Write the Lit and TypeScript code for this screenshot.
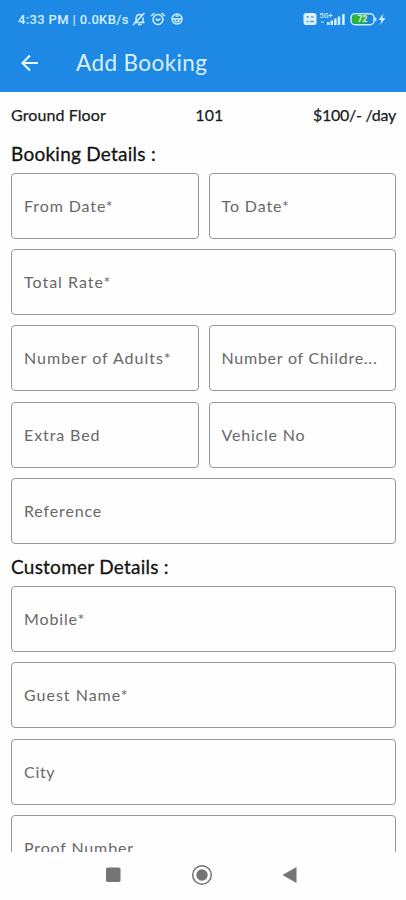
import { LitElement, html, css } from "lit";
import { customElement, property } from "lit/decorators.js";
import { styleMap } from "lit/directives/style-map.js";

interface Field {
  label: string;
  tracking: number;
}

const f = (label: string, tracking = 0.9): Field => ({ label, tracking });

const bookingRows: Field[][] = [
  [f("From Date*"), f("To Date*")],
  [f("Total Rate*", 1)],
  [f("Number of Adults*", 1), f("Number of Childre...", 0.75)],
  [f("Extra Bed"), f("Vehicle No", 0.8)],
  [f("Reference", 0.85)],
];

const customerRows: Field[][] = [
  [f("Mobile*", 0.85)],
  [f("Guest Name*", 1)],
  [f("City", 0.7)],
  [f("Proof Number", 0.85)],
];

@customElement("status-bar")
export class StatusBar extends LitElement {
  static styles = css`
    :host {
      display: flex;
      align-items: center;
      height: 38px;
      padding: 0 19px 0 18px;
      color: #d3f0fb;
      font: 500 13px/39px Roboto, sans-serif;
    }
    .clock {
      width: 111px;
      white-space: nowrap;
      letter-spacing: 0.35px;
    }
    .left {
      margin-left: 3px;
    }
    .right {
      margin-left: auto;
    }
    svg {
      display: block;
    }
  `;

  render() {
    return html`
      <span class="clock">4:33 PM | 0.0KB/s</span>
      <svg class="left" width="52" height="16" viewBox="0 0 52 16" fill="none" stroke="currentColor" stroke-width="1.5">
        <path d="M2 11.500h10.500M4 11V7a3.600 3.600 0 0 1 6-2.600M11 6.500V11M6 13.600h3.500M1 14 12.500 2" />
        <circle cx="26" cy="8.500" r="4.900" />
        <path d="M19.200 5 22.500 2M32.800 5 29.500 2M23.700 7.600l2.200 2 2.600-2" />
        <circle cx="45" cy="8" r="5" />
        <path d="M40 8h10M43.500 5h3M43.300 8v2.700h3.400V8" stroke-width="1.300" />
      </svg>
      <svg class="right" width="84" height="16" viewBox="0 0 84 16">
        <rect x="0.500" y="2" width="13" height="12" rx="2.500" fill="#d9f1fa" />
        <path d="M3.500 6h2.500M8 6h2.500M3.500 10.500h2M7 10.500h4" stroke="#5b9fc9" stroke-width="1.500" />
        <text x="16.500" y="6.500" font-size="7" fill="currentColor" textLength="13">5G+</text>
        <path d="M18 11h3" stroke="#77bce9" stroke-width="2" />
        <path d="M25.200 14v-3M28.800 14v-4.500M32.400 14V7.500M36 14V5.500M40.400 14V3" stroke="currentColor" stroke-width="2.500" />
        <rect x="48" y="2.700" width="23" height="11" rx="4" fill="#1c83dc" stroke="#c9edf3" stroke-width="1.500" />
        <path d="M51.500 3.800h11v8.800h-11a2.500 2.500 0 0 1-2.500-2.500V6.300A2.500 2.500 0 0 1 51.500 3.800" fill="#29b53b" />
        <path d="M72.500 6.500v3.500" stroke="#c9edf3" stroke-width="1.700" />
        <text x="54.500" y="11.300" font-size="8.500" font-weight="700" fill="#dff8cf">72</text>
        <path d="M80.500 2.500 75.500 9h3l-1.500 5 5.500-7h-3.200z" fill="currentColor" />
      </svg>
    `;
  }
}

@customElement("app-header")
export class AppHeader extends LitElement {
  static styles = css`
    :host {
      display: flex;
      align-items: center;
      height: 54px;
      padding-left: 21px;
      color: #d9effb;
    }
    .title {
      margin-left: 37px;
      padding-bottom: 5px;
      font: 400 22.5px/30px Lato, sans-serif;
      letter-spacing: 0.4px;
      white-space: nowrap;
    }
    svg {
      display: block;
      margin-bottom: 5px;
    }
  `;

  render() {
    return html`
      <svg width="18" height="18" viewBox="0 0 18 18" fill="none" stroke="#eaf8fd" stroke-width="2.100">
        <path d="M17 9H2M9 1.500 1.500 9 9 16.500" />
      </svg>
      <span class="title">Add Booking</span>
    `;
  }
}

@customElement("form-section")
export class FormSection extends LitElement {
  @property() heading = "";
  @property({ type: Array }) rows: Field[][] = [];

  static styles = css`
    :host {
      display: block;
      font-family: Lato, sans-serif;
    }
    .heading {
      height: 32px;
      margin: 0;
      color: #141414;
      font-size: 19px;
      font-weight: 400;
      line-height: 26.5px;
      letter-spacing: 0.25px;
      -webkit-text-stroke: 0.3px #141414;
      box-sizing: border-box;
    }
    .rows {
      display: grid;
      gap: 10.35px;
    }
    .row {
      display: flex;
      gap: 10px;
    }
    .field {
      box-sizing: border-box;
      flex: 1 1 0;
      min-width: 0;
      height: 66px;
      padding: 0 12px;
      border: 1px solid #989898;
      border-radius: 4px;
      color: #686868;
      font-size: 16px;
      line-height: 63px;
      white-space: nowrap;
    }
  `;

  render() {
    return html`
      <h2 class="heading">${this.heading}</h2>
      <div class="rows">
        ${this.rows.map(
          (row) => html`<div class="row">
            ${row.map(
              (field) => html`<div class="field" style=${styleMap({ letterSpacing: `${field.tracking}px` })}>${field.label}</div>`,
            )}
          </div>`,
        )}
      </div>
    `;
  }
}

@customElement("nav-bar")
export class NavBar extends LitElement {
  static styles = css`
    :host {
      display: flex;
      align-items: center;
      justify-content: space-between;
      height: 48px;
      padding: 0 108px 2px 105px;
      box-sizing: border-box;
    }
    svg {
      display: block;
    }
  `;

  render() {
    return html`
      <svg width="16" height="24" viewBox="0 0 16 24"><rect x="1" y="4.500" width="14.500" height="14.500" rx="1.800" fill="#747474" /></svg>
      <svg width="24" height="24" viewBox="0 0 24 24">
        <circle cx="12" cy="12" r="9.300" fill="none" stroke="#747474" stroke-width="1.500" />
        <circle cx="12" cy="12" r="5.700" fill="#747474" />
      </svg>
      <svg width="16" height="24" viewBox="0 0 16 24"><path d="M0.500 12 14.500 4v16z" fill="#747474" /></svg>
    `;
  }
}

@customElement("app-root")
export class AppRoot extends LitElement {
  static styles = css`
    :host {
      display: flex;
      flex-direction: column;
      height: 900px;
      overflow: hidden;
      background: #fefefe;
    }
    .top {
      flex: none;
      height: 92px;
      background: #1e88e5;
    }
    .content {
      flex: 1;
      min-height: 0;
      overflow: hidden;
      padding: 0 10px 0 11px;
    }
    .room {
      display: flex;
      justify-content: space-between;
      height: 48.5px;
      color: #1c1c1c;
      font: 400 16px/45px Lato, sans-serif;
      letter-spacing: 0.1px;
      -webkit-text-stroke: 0.25px #1c1c1c;
    }
    .rate {
      letter-spacing: -0.25px;
    }
    .customer {
      margin-top: 10px;
    }
  `;

  render() {
    return html`
      <div class="top">
        <status-bar></status-bar>
        <app-header></app-header>
      </div>
      <main class="content">
        <div class="room">
          <span>Ground Floor</span>
          <span>101</span>
          <span class="rate">$100/- /day</span>
        </div>
        <form-section heading="Booking Details :" .rows=${bookingRows}></form-section>
        <form-section class="customer" heading="Customer Details :" .rows=${customerRows}></form-section>
      </main>
      <nav-bar></nav-bar>
    `;
  }
}
